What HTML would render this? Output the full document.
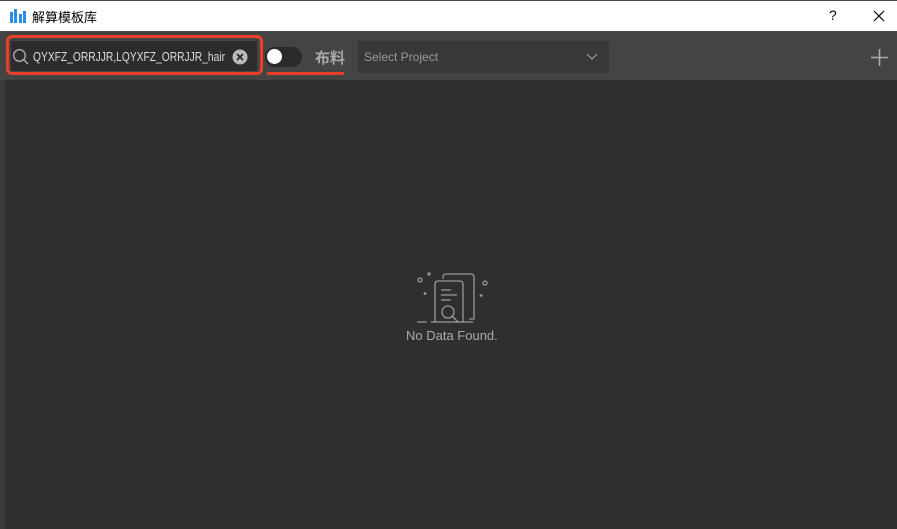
<!DOCTYPE html>
<html><head><meta charset="utf-8"><style>
*{margin:0;padding:0;box-sizing:border-box}
body{width:897px;height:529px;overflow:hidden;background:#2f2f2f;font-family:"Liberation Sans","Noto Sans CJK SC",sans-serif;position:relative}
.title{position:absolute;left:0;top:0;width:897px;height:31px;background:#fff;border-top:1px solid #444}
.tb{position:absolute;left:0;top:31px;width:897px;height:49px;background:#444}
.leftcol{position:absolute;left:0;top:80px;width:5px;height:449px;background:#3a3a3a}
.abs{position:absolute}
</style></head><body>
<div class="title">
 <svg class="abs" style="left:10px;top:8px" width="18" height="14"><rect x="0" y="3" width="3" height="11" fill="#2a8ee8"/><rect x="4" y="0" width="3" height="14" fill="#2a8ee8"/><rect x="9" y="5" width="3" height="9" fill="#2a8ee8"/><rect x="13" y="2" width="3" height="12" fill="#2a8ee8"/></svg>
 <div class="abs" style="left:32px;top:6px;font-size:13px;color:#000">解算模板库</div>
 <div class="abs" style="left:829px;top:6px;font-size:14px;color:#000">?</div>
 <svg class="abs" style="left:873px;top:9px" width="12" height="12"><path d="M1 1L11 11M11 1L1 11" stroke="#000" stroke-width="1.2"/></svg>
</div>
<div class="tb"></div>
<div class="leftcol"></div>
<div class="abs" style="left:6px;top:35px;width:257px;height:40px;border:3px solid #e8402a;border-radius:6px"></div>
<div class="abs" style="left:11px;top:41px;width:246px;height:30px;background:#2c2c2c"></div>
<svg class="abs" style="left:12px;top:48px" width="18" height="18"><circle cx="7.5" cy="7.5" r="5.8" stroke="#aaa" stroke-width="1.4" fill="none"/><path d="M11.5 11.5L16 16" stroke="#aaa" stroke-width="1.5"/></svg>
<svg class="abs" style="left:33px;top:45px" width="193" height="22"><text x="0" y="16" font-family="Liberation Sans, sans-serif" font-size="13" fill="#ddd" textLength="192" lengthAdjust="spacingAndGlyphs">QYXFZ_ORRJJR,LQYXFZ_ORRJJR_hair</text></svg>
<svg class="abs" style="left:232px;top:49px" width="16" height="16"><circle cx="8" cy="8" r="7.5" fill="#bbb"/><path d="M5 5L11 11M11 5L5 11" stroke="#2c2c2c" stroke-width="1.8"/></svg>
<div class="abs" style="left:265px;top:47px;width:37px;height:20px;border-radius:10px;background:#2a2a2a"></div>
<div class="abs" style="left:267px;top:49px;width:15px;height:15px;border-radius:50%;background:#fff"></div>
<div class="abs" style="left:315px;top:47px;font-size:15px;color:#aaa;font-weight:bold">布料</div>
<div class="abs" style="left:267px;top:72px;width:77px;height:3px;background:#e8402a;border-radius:1px"></div>
<div class="abs" style="left:358px;top:41px;width:251px;height:32px;background:#383838;border-radius:2px"></div>
<div class="abs" style="left:364px;top:50px;font-size:12px;color:#999">Select Project</div>
<svg class="abs" style="left:586px;top:53px" width="12" height="8"><path d="M1 1L6 6L11 1" stroke="#999" stroke-width="1.2" fill="none"/></svg>
<svg class="abs" style="left:871px;top:49px" width="17" height="17"><path d="M8.5 0V17M0 8.5H17" stroke="#aaa" stroke-width="1.6"/></svg>
<svg class="abs" style="left:413px;top:266px" width="78" height="64" fill="none" stroke="#999" stroke-width="1.3">
 <circle cx="7" cy="14" r="2"/><circle cx="72" cy="17" r="2"/>
 <path d="M16 6v4M14 8h4M12 26v3M10.5 27.5h3M68 28v3M66.5 29.5h3"/>
 <path d="M30 13v-2a3 3 0 0 1 3-3h25a3 3 0 0 1 3 3v42h-5"/>
 <path d="M22 18a3 3 0 0 1 3-3h22a3 3 0 0 1 3 3v38h-28z"/>
 <path d="M28 24h10M28 29h16M28 34h10"/>
 <circle cx="35" cy="46" r="6"/><path d="M39.5 50.5l6 6"/>
 <path d="M4 56h10M18 56h4M50 56h10"/>
</svg>
<div class="abs" style="left:406px;top:328px;font-size:13px;color:#aaa">No Data Found.</div>
</body></html>
